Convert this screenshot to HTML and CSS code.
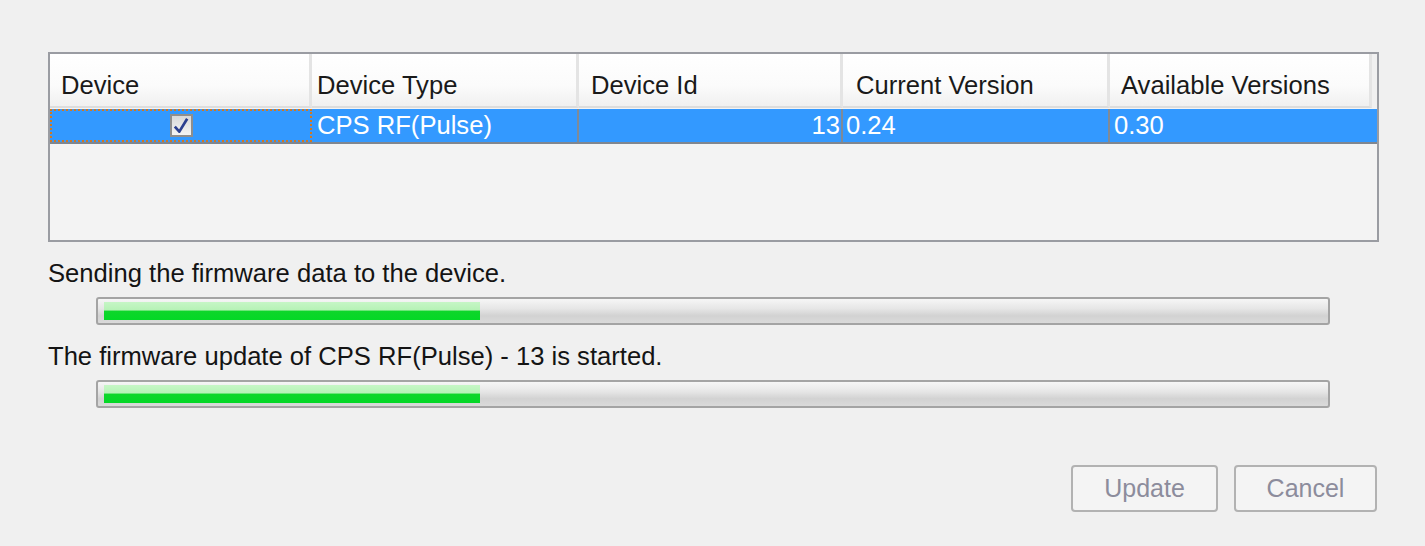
FILE: index.html
```html
<!DOCTYPE html>
<html>
<head>
<meta charset="utf-8">
<link rel="stylesheet" href="styles.css">
</head>
<body>
<div class="dialog">
  <div class="table">
    <div class="header">
      <div class="hcell">Device</div>
      <div class="hcell">Device Type</div>
      <div class="hcell">Device Id</div>
      <div class="hcell">Current Version</div>
      <div class="hcell">Available Versions</div>
      <div class="hfill"></div>
    </div>
    <div class="row">
      <div class="cell focus"><span class="check"><svg width="18" height="18" viewBox="0 0 16 16"><path d="M2.5 8.5 L6.5 13 L13.5 1.5" fill="none" stroke="#2b3f8f" stroke-width="2.4" stroke-linejoin="round"/></svg></span></div>
      <div class="cell">CPS RF(Pulse)</div>
      <div class="cell right">13</div>
      <div class="cell">0.24</div>
      <div class="cell last">0.30</div>
    </div>
  </div>
  <p class="label first">Sending the firmware data to the device.</p>
  <div class="bar"><div class="fill" style="width:376px"></div></div>
  <p class="label">The firmware update of CPS RF(Pulse) - 13 is started.</p>
  <div class="bar"><div class="fill" style="width:376px"></div></div>
  <div class="buttons">
    <button class="btn update" disabled>Update</button>
    <button class="btn cancel" disabled>Cancel</button>
  </div>
</div>
</body>
</html>
```

FILE: styles.css
```css
html, body {
  margin: 0;
  padding: 0;
  background: #f0f0f0;
  width: 1425px;
  height: 546px;
  overflow: hidden;
}
.dialog {
  padding: 52px 0 0 48px;
  width: 1331px;
  font-family: "Liberation Sans", Arial, sans-serif;
  font-size: 25.6px;
  color: #111;
}
.table {
  box-sizing: border-box;
  width: 1331px;
  height: 190px;
  border: 2px solid #9a9ca2;
  background: #f3f3f3;
}
.header {
  display: flex;
  height: 54px;
}
.hcell {
  box-sizing: border-box;
  height: 54px;
  padding: 17px 0 0 11px;
  line-height: 29px;
  background: linear-gradient(#ffffff 0%, #fbfbfb 60%, #f0f0f0 100%);
  border-right: 3px solid #e4e4e4;
  border-bottom: 2px solid #dcdcdc;
  white-space: nowrap;
  color: #1a1a1a;
}
.hcell:nth-child(1) { width: 262px; }
.hcell:nth-child(2) { width: 267px; padding-left: 5px; }
.hcell:nth-child(3) { width: 264px; padding-left: 12px; }
.hcell:nth-child(4) { width: 267px; padding-left: 13px; }
.hcell:nth-child(5) { width: 262px; padding-left: 11px; }
.hfill { flex: 1; background: #f0f0f0; }
.row {
  display: flex;
  height: 35px;
  margin-top: 1px;
  background: #3399ff;
  border-bottom: 2px solid #7f8690;
  box-sizing: border-box;
  color: #fff;
}
.cell {
  box-sizing: border-box;
  height: 33px;
  line-height: 33px;
  padding-left: 5px;
  border-right: 2px solid #7f8a96;
  white-space: nowrap;
}
.cell:nth-child(1) { width: 262px; }
.cell:nth-child(2) { width: 267px; }
.cell:nth-child(3) { width: 264px; }
.cell:nth-child(4) { width: 267px; padding-left: 3px; }
.cell.last { flex: 1; border-right: none; padding-left: 4px; }
.cell.right { text-align: right; padding-right: 1px; }
.cell.focus {
  border: 2px dotted #d4781e;
  display: flex;
  align-items: center;
  justify-content: center;
  padding-left: 0;
}
.check {
  box-sizing: border-box;
  width: 23px;
  height: 23px;
  border: 2px solid #8e8e8e;
  background: linear-gradient(#d8d8d8, #f4f4f4);
  display: flex;
  align-items: center;
  justify-content: center;
}
.label {
  margin: 0;
  height: 28px;
  line-height: 28px;
  white-space: nowrap;
  color: #141414;
}
.label.first { margin-top: 17px; }
.bar {
  box-sizing: border-box;
  margin: 10px 0 17px 48px;
  width: 1234px;
  height: 28px;
  border: 2px solid #a4a4a4;
  border-radius: 3px;
  background: linear-gradient(#f6f6f6 0%, #e6e6e6 40%, #d2d2d2 70%, #dadada 100%);
  padding: 3px 0 0 6px;
}
.fill {
  height: 18px;
  background: linear-gradient(#c6f6c6 0%, #b6f2b6 45%, #0ed62a 50%, #04d826 100%);
}
.buttons {
  display: flex;
  justify-content: flex-end;
  gap: 16px;
  margin-top: 57px;
  padding-right: 2px;
}
.btn {
  box-sizing: border-box;
  height: 47px;
  border: 2px solid #b2b2b2;
  border-radius: 4px;
  background: #f4f4f4;
  color: #8c8c9c;
  font-family: "Liberation Sans", Arial, sans-serif;
  font-size: 25px;
  padding: 0;
}
.btn.update { width: 147px; }
.btn.cancel { width: 143px; }
```
